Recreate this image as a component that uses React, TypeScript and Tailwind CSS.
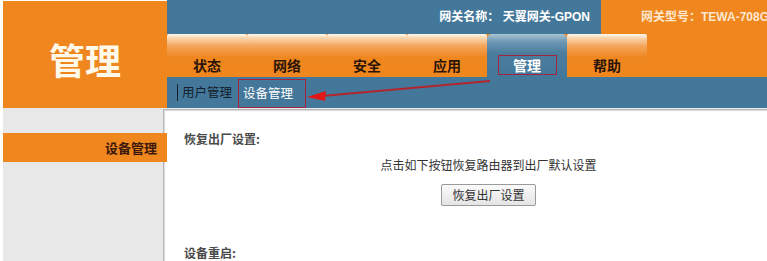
import React from "react";

const cjk = { fontFamily: '"Noto Sans CJK SC", "Liberation Sans", sans-serif' };

export default function App() {
  const tabs = ["状态", "网络", "安全", "应用", "管理", "帮助"];
  return (
    <div className="relative w-[767px] h-[261px] overflow-hidden bg-white" style={cjk}>
      {/* header */}
      <div className="flex h-[108px]">
        <div className="ml-[3px] mt-[1px] w-[164px] bg-[#ef861e] flex items-center justify-center pt-[8px]">
          <span className="text-[36px] font-bold leading-none text-[#fff9ea]">管理</span>
        </div>
        <div className="flex-1 flex flex-col">
          <div className="flex h-[34px]">
            <div className="flex-1 bg-[#44789a] flex items-center justify-end pr-[11px] pb-[1px]">
              <span className="text-[12px] font-bold text-white" style={{ fontFamily: '"Liberation Sans", "Noto Sans CJK SC", sans-serif' }}>
                网关名称： 天翼网关-GPON
              </span>
            </div>
            <div className="w-[166px] bg-[#ef861e] flex items-center pl-[40px] pb-[1px] whitespace-nowrap">
              <span className="text-[12px] font-bold text-[#fde7cf]" style={{ fontFamily: '"Liberation Sans", "Noto Sans CJK SC", sans-serif' }}>
                网关型号：TEWA-708G
              </span>
            </div>
          </div>
          <div className="flex h-[43px] bg-[#ef861e]">
            {tabs.map((t) =>
              t === "管理" ? (
                <div
                  key={t}
                  className="w-[80px] rounded-t-[5px] bg-[linear-gradient(to_bottom,#a9c3d4_0%,#6e98b4_18%,#4a7c9d_45%,#44789a_100%)] flex items-end justify-center"
                >
                  <span className="mb-[2px] h-[20px] w-[59px] border border-[#a3243f] flex items-center justify-center text-[14px] font-bold text-white leading-none">
                    {t}
                  </span>
                </div>
              ) : (
                <div
                  key={t}
                  className="w-[80px] rounded-t-[2px] bg-[linear-gradient(to_bottom,#fffaf2_0%,#fbd9b6_8%,#f4a55a_28%,#ef861e_55%,#ef861e_100%)] flex items-end justify-center pb-[5px]"
                >
                  <span className="text-[14px] font-bold text-[#2a1508] leading-none">{t}</span>
                </div>
              )
            )}
            <div className="flex-1 bg-[#ef861e]" />
          </div>
          <div className="h-[31px] bg-[#44789a] flex items-center pl-[10px]">
            <span className="h-[17px] w-[1px] bg-[#14202c] mr-[4px]" />
            <span className="text-[12.5px] text-[#13202c] leading-none">用户管理</span>
            <span className="ml-[6px] h-[29px] mt-[2px] w-[68px] border border-[#a3243f] flex items-center pl-[4px] text-[12.5px] text-white leading-none">
              设备管理
            </span>
          </div>
        </div>
      </div>

      {/* body */}
      <div className="flex h-[153px]">
        <div className="ml-[3px] w-[160px] bg-[#e8e8e8] flex flex-col">
          <div className="mt-[25px] w-[164px] h-[29px] bg-[#ef861e] relative z-10 flex items-center justify-end pr-[10px]">
            <span className="text-[13px] font-bold text-[#3b190c] leading-none">设备管理</span>
          </div>
        </div>
        <div className="flex-1 flex flex-col">
          <div className="h-[9px] bg-[linear-gradient(to_bottom,#eef0f1,#e2e5e7)]" />
          <div className="flex-1 bg-white border-t border-l border-[#b8b8b8] shadow-[inset_1px_1px_1px_#d8d8d8] pl-[20px] pt-[21px]">
            <div className="text-[12px] font-semibold text-[#4a4a4a] leading-[16px]">恢复出厂设置:</div>
            <div className="pl-[26px] flex flex-col items-center">
              <div className="mt-[10px] text-[12px] text-[#333] leading-[16px]">点击如下按钮恢复路由器到出厂默认设置</div>
              <button className="mt-[11px] w-[95px] h-[22px] border border-[#9a9a9a] rounded-[2px] bg-[linear-gradient(to_bottom,#fafafa,#e4e4e4)] text-[12px] text-[#333] leading-none">
                恢复出厂设置
              </button>
            </div>
            <div className="mt-[39px] text-[12px] font-semibold text-[#4a4a4a] leading-[16px]">设备重启:</div>
          </div>
        </div>
      </div>

      {/* annotation arrow */}
      <svg className="absolute left-0 top-0 pointer-events-none" width="767" height="261">
        <line x1="490" y1="81" x2="322" y2="96" stroke="#b3262e" strokeWidth="2" />
        <polygon points="307,97 326,91 325,101" fill="#e01818" />
      </svg>
    </div>
  );
}
